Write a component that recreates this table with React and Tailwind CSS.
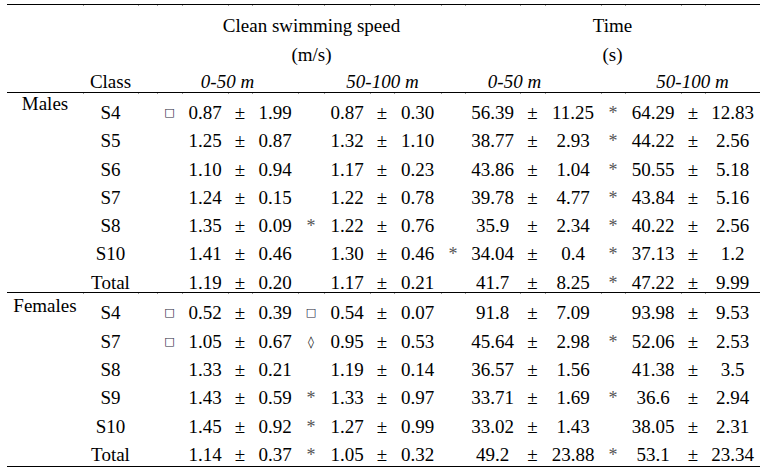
import React from "react";

const cols =
  "grid grid-cols-[76px_55px_19px_25px_46px_24px_46px_26px_46px_24px_47px_24px_55px_25px_56px_24px_56px_24px_55px]";

const males = [
  ["Males", "S4", "sq", "0.87", "1.99", "", "0.87", "0.30", "", "56.39", "11.25", "*", "64.29", "12.83"],
  ["", "S5", "", "1.25", "0.87", "", "1.32", "1.10", "", "38.77", "2.93", "*", "44.22", "2.56"],
  ["", "S6", "", "1.10", "0.94", "", "1.17", "0.23", "", "43.86", "1.04", "*", "50.55", "5.18"],
  ["", "S7", "", "1.24", "0.15", "", "1.22", "0.78", "", "39.78", "4.77", "*", "43.84", "5.16"],
  ["", "S8", "", "1.35", "0.09", "*", "1.22", "0.76", "", "35.9", "2.34", "*", "40.22", "2.56"],
  ["", "S10", "", "1.41", "0.46", "", "1.30", "0.46", "*", "34.04", "0.4", "*", "37.13", "1.2"],
  ["", "Total", "", "1.19", "0.20", "", "1.17", "0.21", "", "41.7", "8.25", "*", "47.22", "9.99"],
];

const females = [
  ["Females", "S4", "sq", "0.52", "0.39", "sq", "0.54", "0.07", "", "91.8", "7.09", "", "93.98", "9.53"],
  ["", "S7", "sq", "1.05", "0.67", "lz", "0.95", "0.53", "", "45.64", "2.98", "*", "52.06", "2.53"],
  ["", "S8", "", "1.33", "0.21", "", "1.19", "0.14", "", "36.57", "1.56", "", "41.38", "3.5"],
  ["", "S9", "", "1.43", "0.59", "*", "1.33", "0.97", "", "33.71", "1.69", "*", "36.6", "2.94"],
  ["", "S10", "", "1.45", "0.92", "*", "1.27", "0.99", "", "33.02", "1.43", "", "38.05", "2.31"],
  ["", "Total", "", "1.14", "0.37", "*", "1.05", "0.32", "", "49.2", "23.88", "*", "53.1", "23.34"],
];

const Cell = ({ children }) => (
  <div className="flex justify-center pt-[9px] leading-[20px] whitespace-nowrap">{children}</div>
);

const Mark = ({ m }) => (
  <Cell>
    {m === "sq" && <span className="font-['DejaVu_Sans',sans-serif] text-[11px] text-[#1c1c3a]">□</span>}
    {m === "*" && <span className="text-[18px] text-[#555]">*</span>}
    {m === "lz" && <span className="font-['DejaVu_Sans',sans-serif] text-[12px] text-[#111] align-[3px]">◊</span>}
    {m === "" && <span>&nbsp;</span>}
  </Cell>
);

const Ticks = () => (
  <div className={`${cols} h-px`}>
    {Array.from({ length: 19 }).map((_, i) => (
      <div key={i} className={i === 0 ? "" : "border-l border-[#999]"} />
    ))}
  </div>
);

const Row = ({ r, h, labelPad }) => (
  <div className={`${cols} ${h}`}>
    <div className={`flex justify-center leading-[20px] ${labelPad}`}>{r[0]}</div>
    <Cell>{r[1]}</Cell>
    <div />
    <Mark m={r[2]} />
    <Cell>{r[3]}</Cell>
    <Cell>±</Cell>
    <Cell>{r[4]}</Cell>
    <Mark m={r[5]} />
    <Cell>{r[6]}</Cell>
    <Cell>±</Cell>
    <Cell>{r[7]}</Cell>
    <Mark m={r[8]} />
    <Cell>{r[9]}</Cell>
    <Cell>±</Cell>
    <Cell>{r[10]}</Cell>
    <Mark m={r[11]} />
    <Cell>{r[12]}</Cell>
    <Cell>±</Cell>
    <Cell>{r[13]}</Cell>
  </div>
);

export default function App() {
  return (
    <div className="w-[766px] h-[473px] overflow-hidden bg-white text-black font-['Liberation_Serif',serif] text-[19px] pt-[4px]">
      <div className="ml-[7px] w-[753px]">
        <div className="h-px bg-black" />
        <Ticks />

        {/* header */}
        <div className={`${cols} h-[39px] items-center leading-[20px]`}>
          <div className="col-start-5 col-span-7 text-center">Clean swimming speed</div>
          <div className="col-start-13 col-span-7 text-center">Time</div>
        </div>
        <div className={`${cols} h-[20px] items-center leading-[20px]`}>
          <div className="col-start-5 col-span-7 text-center">(m/s)</div>
          <div className="col-start-13 col-span-7 text-center">(s)</div>
        </div>
        <div className={`${cols} h-[27px] items-start pt-[7px] leading-[20px]`}>
          <div className="col-start-2 text-center">Class</div>
          <div className="col-start-4 col-span-4 text-center italic">0-50 m</div>
          <div className="col-start-9 col-span-3 text-center italic">50-100 m</div>
          <div className="col-start-12 col-span-4 text-center italic pr-[13px]">0-50 m</div>
          <div className="col-start-17 col-span-3 text-center italic">50-100 m</div>
        </div>
        <div className="h-px bg-black" />
        <Ticks />

        {males.map((r, i) => (
          <Row key={i} r={r} h="h-[28.3px]" labelPad="pt-0" />
        ))}
        <div className="h-px bg-black" />
        <Ticks />

        {females.map((r, i) => (
          <Row key={i} r={r} h="h-[28.45px]" labelPad="pt-[2px]" />
        ))}
        <div className="h-px" />
        <div className="h-px bg-black" />
      </div>
    </div>
  );
}
